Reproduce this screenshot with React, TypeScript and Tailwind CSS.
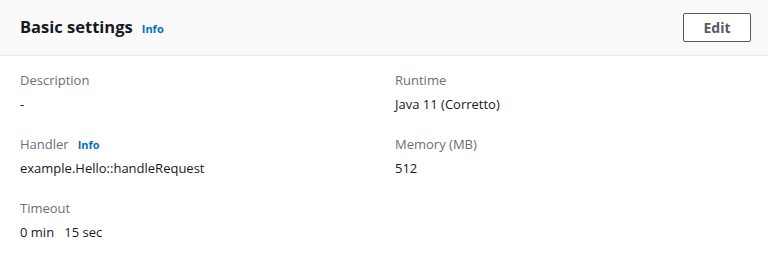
import React from 'react';

const Field = ({ label, value, info }: { label: string; value: string; info?: boolean }) => (
  <div className="flex flex-col">
    <div className="flex items-center gap-[9px] h-[20px] text-[13px] text-[#687078]">
      <span>{label}</span>
      {info && <span className="text-[11px] font-bold text-[#0073bb]">Info</span>}
    </div>
    <div className="mt-[4px] h-[20px] text-[13px] font-medium text-[#16191f] whitespace-pre">{value}</div>
  </div>
);

export default function App() {
  return (
    <div
      className="w-[768px] h-[280px] bg-white"
      style={{ fontFamily: '"Open Sans", "Noto Sans", sans-serif' }}
    >
      <div className="flex items-center justify-between h-[56px] px-[20px] bg-[#fafafa] border-b border-[#eaeded]">
        <div className="flex items-baseline gap-[9px]">
          <h2 className="text-[16.5px] font-bold text-[#16191f]">Basic settings</h2>
          <span className="text-[11px] font-bold text-[#0073bb]">Info</span>
        </div>
        <button className="w-[68px] h-[29px] mr-[-3px] border border-[#545b64] rounded-[2px] bg-white text-[14px] font-bold text-[#545b64]">
          Edit
        </button>
      </div>
      <div className="grid grid-cols-2 gap-x-[20px] pl-[20px] pt-[15px] pr-[20px]">
        <div className="flex flex-col gap-[20px]">
          <Field label="Description" value="-" />
          <Field label="Handler" value="example.Hello::handleRequest" info />
          <Field label="Timeout" value="0 min   15 sec" />
        </div>
        <div className="flex flex-col gap-[20px] pl-[1px]">
          <Field label="Runtime" value="Java 11 (Corretto)" />
          <Field label="Memory (MB)" value="512" />
        </div>
      </div>
    </div>
  );
}
